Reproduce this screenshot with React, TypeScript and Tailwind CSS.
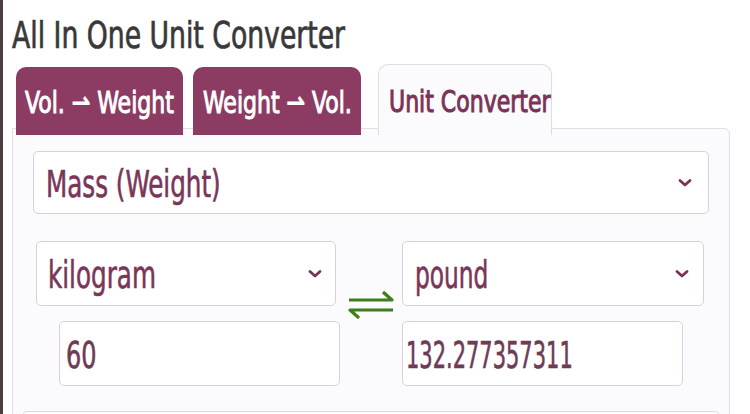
import { useState } from "react";

const FONT = { fontFamily: '"DejaVu Sans Condensed", "DejaVu Sans", sans-serif' };

function Chevron() {
  return (
    <svg width="14" height="10" viewBox="0 0 14 10" className="shrink-0">
      <path d="M2 2.5 L7 7 L12 2.5" fill="none" stroke="#7a3356" strokeWidth="2.8" strokeLinecap="round" strokeLinejoin="round" />
    </svg>
  );
}

function SwapIcon() {
  return (
    <svg width="48" height="32" viewBox="0 0 48 32">
      <path d="M2 13 H45 L36 5" fill="none" stroke="#3f7c1b" strokeWidth="3.2" strokeLinejoin="round" />
      <path d="M46 23 H3 L12 31" fill="none" stroke="#3f7c1b" strokeWidth="3.2" strokeLinejoin="round" />
    </svg>
  );
}

function SelectBox({ label, className, squeeze }: { label: string; className: string; squeeze: string }) {
  return (
    <div className={`flex items-center justify-between bg-white border border-[#d8d0e0] rounded-[5px] ${className}`}>
      <span className={`inline-block origin-left text-[37px] text-[#7a3658] leading-none pt-[3px] whitespace-nowrap [-webkit-text-stroke-width:0.6px] ${squeeze}`}>{label}</span>
      <Chevron />
    </div>
  );
}

function ValueBox({ value, className, squeeze }: { value: string; className: string; squeeze: string }) {
  return (
    <div className={`flex items-center bg-white border border-[#d8d0e0] rounded-[5px] ${className}`}>
      <span className={`inline-block origin-left text-[37px] text-[#6e3b55] leading-none pt-[3px] whitespace-nowrap [-webkit-text-stroke-width:0.6px] ${squeeze}`}>{value}</span>
    </div>
  );
}

export default function App() {
  const [tab] = useState("unit");
  const tabs = [
    { id: "vw", label: "Vol. ⇀ Weight", w: "w-[167px]", pad: "pl-[9px]" },
    { id: "wv", label: "Weight ⇀ Vol.", w: "w-[168px]", pad: "pl-[10px]" },
  ];

  return (
    <div className="w-[750px] h-[414px] overflow-hidden bg-white border-l-[3px] border-[#4b4040] pl-[9px] font-stretch-condensed" style={FONT}>
      <h1 className="text-[38px] leading-none text-[#383838] pt-[16px] whitespace-nowrap">
        <span className="inline-block origin-left scale-x-[0.78] [-webkit-text-stroke-width:0.7px]">All In One Unit Converter</span>
      </h1>

      <div className="flex items-end pl-[4px] mt-[10px] relative z-10 -mb-[7px]">
        {tabs.map((t, i) => (
          <div
            key={t.id}
            className={`${t.w} ${t.pad} h-[68px] bg-[#8c3c63] rounded-t-[10px] flex items-center text-white text-[31px] leading-none whitespace-nowrap ${i === 0 ? "mr-[10px]" : "mr-[17px]"}`}
          >
            <span className="inline-block origin-left scale-x-[0.79] pt-[2px] [-webkit-text-stroke-width:1px]">{t.label}</span>
          </div>
        ))}
        <div
          className={`w-[174px] h-[71px] rounded-t-[10px] border border-b-0 border-[#e4dae4] flex items-center pl-[10px] text-[31px] leading-none text-[#7a3356] whitespace-nowrap ${tab === "unit" ? "bg-[#fbfafd]" : "bg-white"}`}
        >
          <span className="inline-block origin-left scale-x-[0.79] pt-[3px] [-webkit-text-stroke-width:1px]">Unit Converter</span>
        </div>
      </div>

      <div className="w-[718px] h-[300px] bg-[#fbfafd] border border-[#e4dde6] rounded-tr-[6px] pt-[22px] pl-[20px]">
        <SelectBox label="Mass (Weight)" squeeze="scale-x-[0.74]" className="w-[676px] h-[63px] pl-[12px] pr-[16px]" />

        <div className="flex mt-[27px] ml-[3px]">
          <div className="w-[304px] flex flex-col">
            <SelectBox label="kilogram" squeeze="scale-x-[0.74]" className="w-[300px] h-[65px] pl-[11px] pr-[13px]" />
            <ValueBox value="60" squeeze="scale-x-[0.72]" className="w-[281px] h-[65px] ml-[23px] mt-[15px] pl-[6px]" />
          </div>
          <div className="w-[62px] flex justify-center items-start pt-[46px]">
            <SwapIcon />
          </div>
          <div className="w-[304px] flex flex-col">
            <SelectBox label="pound" squeeze="scale-x-[0.7]" className="w-[302px] h-[65px] pl-[12px] pr-[14px]" />
            <ValueBox value="132.277357311" squeeze="scale-x-[0.63]" className="w-[281px] h-[65px] mt-[15px] pl-[3px]" />
          </div>
        </div>

        <div className="w-[698px] h-[40px] mt-[25px] -ml-[11px] bg-white border border-[#e0d8e4] rounded-[5px]" />
      </div>
    </div>
  );
}
